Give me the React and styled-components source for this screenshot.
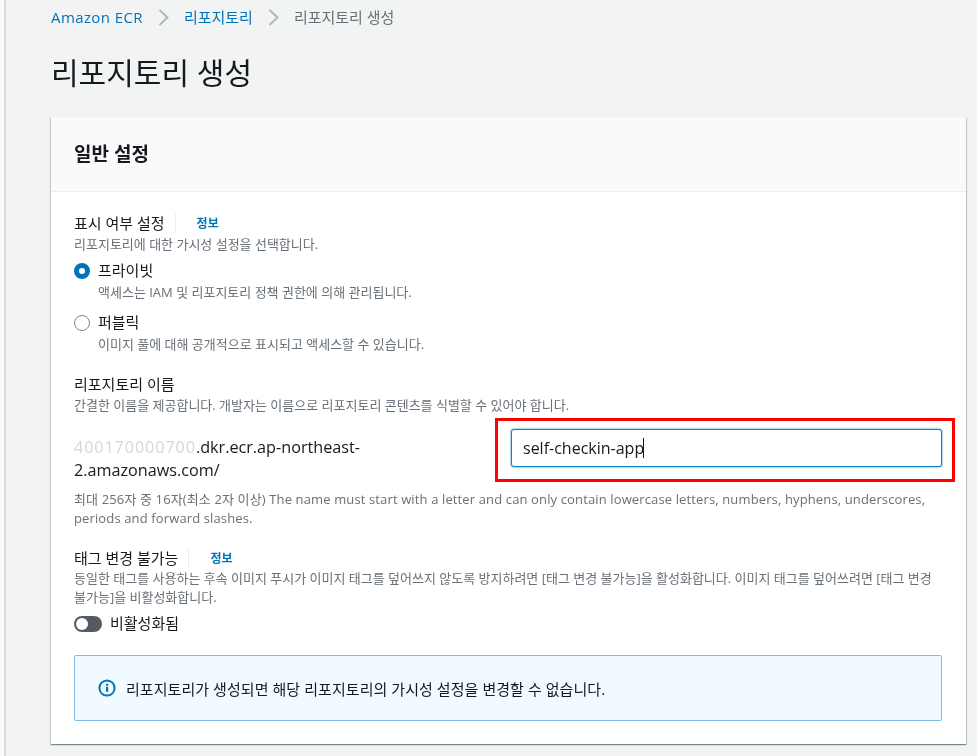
import React from "react";
import styled, { createGlobalStyle } from "styled-components";

const Global = createGlobalStyle`
  html, body { margin: 0; padding: 0; background: #fafafa; }
  body { font-family: "Open Sans", "Noto Sans CJK KR", sans-serif; color: #16191f; }
`;
const FONT = `"Open Sans", "Noto Sans CJK KR", sans-serif`;

const Page = styled.div`
  height: 756px; box-sizing: border-box; overflow: hidden;
  border-left: 2px solid #d5dbdb; margin-left: 4px; width: 973px;
  padding: 0 11px 0 45px; background: #f2f3f3; font-family: ${FONT};
  filter: blur(0.35px);
`;
const Crumbs = styled.nav`
  display: flex; align-items: center; height: 33px; font-size: 15px; color: #545b64;
`;
const CrumbLink = styled.a`color: #0073bb; letter-spacing: ${p => p.$spacing || 0}px;`;
const CrumbText = styled.span`color: #687078;`;
const Chevron = styled.svg`
  width: 11px; height: 17px; margin: 1px 15px 0 15px; fill: none; stroke: #aab7b8; stroke-width: 1.8;
`;
const Title = styled.h1`
  margin: 18px 0 0; height: 66px; font-size: 30px; font-weight: 400; line-height: 44px;
`;
const Card = styled.section`
  background: #fff; box-shadow: 0 1px 1px 0 rgba(0,28,36,.3), 1px 1px 1px 0 rgba(0,28,36,.15), -1px 1px 1px 0 rgba(0,28,36,.15);
  height: 627px;
`;
const CardHead = styled.header`
  display: flex; align-items: center; box-sizing: border-box; height: 75px; padding: 0 23px 3px;
  background: #fafafa; border-bottom: 1px solid #eaeded;
  font-size: 19px; font-weight: 600;
`;
const CardBody = styled.div`padding: 21px 24px 0 23px;`;
const LabelRow = styled.div`display: flex; align-items: center; height: 21px;`;
const Label = styled.span`display: block; font-size: 15px; line-height: 21px;`;
const Info = styled.a`
  margin-left: 10px; padding-left: 21px; border-left: 1px solid #eaeded;
  font-size: 12px; line-height: 19px; font-weight: 700; color: #0073bb;
`;
const Desc = styled.p`
  margin: 0; font-size: 13px; line-height: 20px; color: #687078;
`;
const TightDesc = styled(Desc)`line-height: 19px;`;
const Radios = styled.div`display: flex; flex-direction: column; gap: 8px; margin-top: 6px;`;
const Radio = styled.div`display: grid; grid-template-columns: 24px 1fr;`;
const RadioDot = styled.span`
  box-sizing: border-box; width: 16px; height: 16px; border-radius: 50%; margin-top: 3px;
  background: #fff;
  border: ${p => (p.$checked ? "5px solid #0073bb" : "1.5px solid #7d8998")};
`;
const RadioLabel = styled.span`font-size: 15px; line-height: 21px;`;
const RadioDesc = styled(Desc)`grid-column: 2; line-height: 23px;`;
const Field = styled.div`margin-top: ${p => p.$top}px;`;
const NameRow = styled.div`display: flex; justify-content: space-between; align-items: flex-start; margin-top: 3px;`;
const Url = styled.div`
  width: 300px; margin-top: 18px; font-size: 16.2px; line-height: 23px; color: #16191f;
`;
const Masked = styled.span`color: #d3d7da; letter-spacing: 0.9px;`;
const Highlight = styled.div`
  box-sizing: border-box; width: 460px; height: 64px; padding: 8px 10px 0 13px;
  border: 3px solid #f00; flex: none; margin-right: -13px;
`;
const Input = styled.div`
  box-sizing: border-box; display: flex; align-items: center; height: 38px; padding: 0 11px;
  border: 1.5px solid #0f80c4; border-radius: 3px; box-shadow: 0 0 2px #0073bb;
  font-size: 16px; color: #16191f; background: #fff;
`;
const Caret = styled.span`display: inline-block; width: 1px; height: 20px; background: #16191f; margin-left: -1px;`;
const Constraint = styled(TightDesc)`margin-top: 8px; letter-spacing: 0.13px;`;
const Toggle = styled.div`display: flex; align-items: center; gap: 8px; margin-top: 6px; height: 21px;`;
const Track = styled.span`
  display: flex; align-items: center; box-sizing: border-box; width: 28px; height: 16px; padding: 0 2px;
  border-radius: 8px; background: #545b64;
`;
const Thumb = styled.span`width: 12px; height: 12px; border-radius: 50%; background: #fff;`;
const Alert = styled.div`
  display: flex; align-items: center; gap: 10px; box-sizing: border-box; height: 66px; margin-top: 21px; padding: 0 23px;
  background: #f1faff; border: 1px solid #7fbde6; border-radius: 2px; font-size: 15px; letter-spacing: 0.06px;
`;
const InfoIcon = styled.svg`width: 18px; height: 18px; flex: none;`;

export default function App() {
  return (
    <Page>
      <Global />
      <Crumbs>
        <CrumbLink $spacing={0.4}>Amazon ECR</CrumbLink>
        <Chevron viewBox="0 0 11 17"><path d="M1.5 1l8 7.5-8 7.5" /></Chevron>
        <CrumbLink>리포지토리</CrumbLink>
        <Chevron viewBox="0 0 11 17"><path d="M1.5 1l8 7.5-8 7.5" /></Chevron>
        <CrumbText>리포지토리 생성</CrumbText>
      </Crumbs>
      <Title>리포지토리 생성</Title>
      <Card>
        <CardHead>일반 설정</CardHead>
        <CardBody>
          <LabelRow><Label>표시 여부 설정</Label><Info>정보</Info></LabelRow>
          <Desc>리포지토리에 대한 가시성 설정을 선택합니다.</Desc>
          <Radios>
            <Radio>
              <RadioDot $checked />
              <RadioLabel>프라이빗</RadioLabel>
              <RadioDesc>액세스는 IAM 및 리포지토리 정책 권한에 의해 관리됩니다.</RadioDesc>
            </Radio>
            <Radio>
              <RadioDot />
              <RadioLabel>퍼블릭</RadioLabel>
              <RadioDesc>이미지 풀에 대해 공개적으로 표시되고 액세스할 수 있습니다.</RadioDesc>
            </Radio>
          </Radios>
          <Field $top={18}>
            <Label>리포지토리 이름</Label>
            <Desc>간결한 이름을 제공합니다. 개발자는 이름으로 리포지토리 콘텐츠를 식별할 수 있어야 합니다.</Desc>
            <NameRow>
              <Url><Masked>400170000700</Masked>.dkr.ecr.ap-northeast-2.amazonaws.com/</Url>
              <Highlight>
                <Input>self-checkin-app<Caret /></Input>
              </Highlight>
            </NameRow>
            <Constraint>최대 256자 중 16자(최소 2자 이상) The name must start with a letter and can only contain lowercase letters, numbers, hyphens, underscores, periods and forward slashes.</Constraint>
          </Field>
          <Field $top={20}>
            <LabelRow><Label>태그 변경 불가능</Label><Info>정보</Info></LabelRow>
            <TightDesc>동일한 태그를 사용하는 후속 이미지 푸시가 이미지 태그를 덮어쓰지 않도록 방지하려면 [태그 변경 불가능]을 활성화합니다. 이미지 태그를 덮어쓰려면 [태그 변경 불가능]을 비활성화합니다.</TightDesc>
            <Toggle><Track><Thumb /></Track><Label>비활성화됨</Label></Toggle>
          </Field>
          <Alert>
            <InfoIcon viewBox="0 0 18 18">
              <circle cx="9" cy="9" r="7.6" fill="none" stroke="#0073bb" strokeWidth="2" />
              <rect x="8" y="7.8" width="2.2" height="5" fill="#0073bb" />
              <rect x="8" y="4.8" width="2.2" height="2" fill="#0073bb" />
            </InfoIcon>
            리포지토리가 생성되면 해당 리포지토리의 가시성 설정을 변경할 수 없습니다.
          </Alert>
        </CardBody>
      </Card>
    </Page>
  );
}
